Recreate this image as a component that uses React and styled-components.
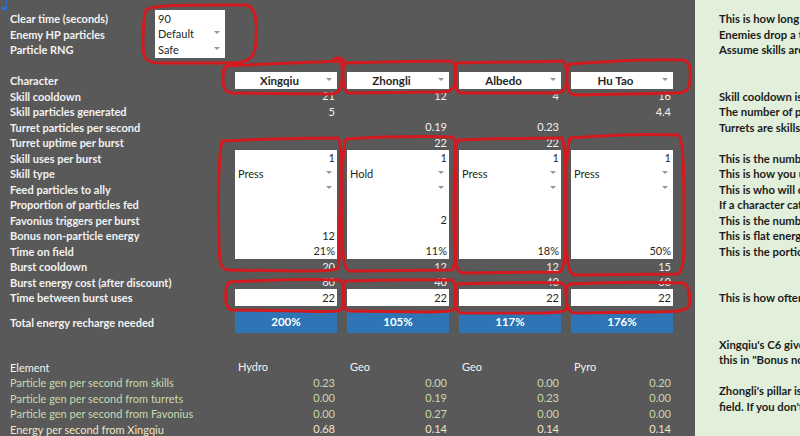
import React from 'react';
import styled, { createGlobalStyle } from 'styled-components';

const GlobalStyle = createGlobalStyle`
  html, body { margin: 0; padding: 0; background: #595959; }
  body { font-family: Lato, "Liberation Sans", Arial, sans-serif; }
`;

const ROW = 15.5;

const Page = styled.div`
  position: relative;
  display: flex;
  width: 800px;
  height: 436px;
  overflow: hidden;
  font-family: Lato, "Liberation Sans", Arial, sans-serif;
  font-size: 11px;
`;

const Sheet = styled.div`
  flex: none;
  width: 695px;
  box-sizing: border-box;
  padding-left: 10px;
  background: #595959;
  display: flex;
  flex-direction: column;
`;

const Corner = styled.div`
  height: 10px;
  margin-left: -10px;
  display: flex;
  flex-direction: column;
  align-items: flex-start;
`;

const CornerLine = styled.span`
  width: 1.5px;
  height: 7px;
  margin-left: 5.5px;
  background: #2f6fd0;
`;

const CornerBlock = styled.span`
  width: 6px;
  height: 3px;
  margin-left: 1px;
  background: #2f6fd0;
`;

const Row = styled.div`
  display: grid;
  grid-template-columns: ${(p) => (p.$top ? '145px 70px' : '215px repeat(4, 102px)')};
  column-gap: ${(p) => (p.$top ? '0px' : '10px')};
  height: ${(p) => p.$h || ROW}px;
  margin-top: ${(p) => p.$mt || 0}px;
`;

const labelColors = {
  white: '#f2f2f2',
  green: '#c9d9b0',
  cream: '#f4e5c4',
};

const Label = styled.div`
  color: ${(p) => labelColors[p.$tone || 'white']};
  font-weight: ${(p) => (p.$plain ? 400 : 700)};
  line-height: ${(p) => p.$lh || ROW}px;
  white-space: nowrap;
  padding-top: 1px;
`;

const Cell = styled.div`
  display: grid;
  grid-template-columns: 1fr ${(p) => (p.$caret ? '16px' : '0px')};
  align-items: center;
  box-sizing: border-box;
  padding: 0 ${(p) => (p.$caret ? 0 : 2)}px 0 3px;
  background: ${(p) => (p.$white ? '#ffffff' : 'transparent')};
  box-shadow: ${(p) => (p.$white && !p.$last ? 'inset 0 -1px 0 #d9d9d9' : 'none')};
  color: ${(p) => (p.$white ? '#262626' : labelColors[p.$tone || 'white'])};
  font-weight: ${(p) => (p.$bold ? 700 : 400)};
  font-size: ${(p) => (p.$bold ? 11.5 : 11)}px;
  text-align: ${(p) => p.$align || 'right'};
  line-height: ${ROW}px;
  white-space: nowrap;
  overflow: hidden;
`;

const Caret = styled.span`
  justify-self: center;
  width: 0;
  height: 0;
  border-left: 3px solid transparent;
  border-right: 3px solid transparent;
  border-top: 3.5px solid #969696;
  margin-top: -2px;
`;

const Total = styled.div`
  display: flex;
  align-items: center;
  justify-content: center;
  background: #2e75b6;
  color: #ffffff;
  font-weight: 700;
  font-size: 11.5px;
`;

const Notes = styled.div`
  flex: 1;
  background: #e2efda;
  padding: 10px 0 0 24px;
  overflow: hidden;
  font-size: 11.3px;
`;

const Note = styled.div`
  height: ${(p) => (p.$rows || 1) * ROW}px;
  line-height: ${ROW}px;
  white-space: nowrap;
  color: #1c1c1c;
  font-weight: 700;
  padding-top: 1px;
  box-sizing: border-box;
`;

const Ink = styled.svg`
  position: absolute;
  left: 0;
  top: 0;
  pointer-events: none;
`;

const chars = ['Xingqiu', 'Zhongli', 'Albedo', 'Hu Tao'];

const greyRows = [
  ['Skill cooldown', ['21', '12', '4', '16']],
  ['Skill particles generated', ['5', '', '', '4.4']],
  ['Turret particles per second', ['', '0.19', '0.23', '']],
  ['Turret uptime per burst', ['', '22', '22', '']],
];

const inputRows = [
  ['Skill uses per burst', ['1', '1', '1', '1']],
  ['Skill type', ['Press', 'Hold', 'Press', 'Press'], true],
  ['Feed particles to ally', ['', '', '', ''], true],
  ['Proportion of particles fed', ['', '', '', '']],
  ['Favonius triggers per burst', ['', '2', '', '']],
  ['Bonus non-particle energy', ['12', '', '', '']],
  ['Time on field', ['21%', '11%', '18%', '50%']],
];

const burstRows = [
  ['Burst cooldown', ['20', '12', '12', '15']],
  ['Burst energy cost (after discount)', ['80', '40', '40', '60']],
];

const totals = ['200%', '105%', '117%', '176%'];
const elements = ['Hydro', 'Geo', 'Geo', 'Pyro'];

const genRows = [
  ['Particle gen per second from skills', ['0.23', '0.00', '0.00', '0.20'], 'green'],
  ['Particle gen per second from turrets', ['0.00', '0.19', '0.23', '0.00'], 'green'],
  ['Particle gen per second from Favonius', ['0.00', '0.27', '0.00', '0.00'], 'green'],
  ['Energy per second from Xingqiu', ['0.68', '0.14', '0.14', '0.14'], 'cream'],
];

const notes = [
  ['This is how long the fight lasts'],
  ['Enemies drop a total of particles'],
  ['Assume skills are used on cooldown'],
  ['', 2],
  ['Skill cooldown is after reductions'],
  ['The number of particles generated'],
  ['Turrets are skills that keep generating'],
  ['', 1],
  ['This is the number of skill uses'],
  ['This is how you use the skill'],
  ['This is who will collect the particles'],
  ['If a character catches particles'],
  ['This is the number of Favonius procs'],
  ['This is flat energy from other sources'],
  ['This is the portion of time on field'],
  ['', 2],
  ['This is how often you burst'],
  ['', 2],
  ["Xingqiu's C6 gives energy, put"],
  ['this in "Bonus non-particle energy"'],
  ['', 1],
  ["Zhongli's pillar is a turret on"],
  ["field. If you don't use it"],
];

const inkPaths = [
  'M146 10 C152 4 200 5 246 5 C256 7 257 20 256 40 C256 57 250 63 230 63 L160 63 C146 63 143 58 143 45 C143 30 143 18 146 10',
  'M228 66 C260 64 300 63 338 61 C343 62 343 70 342 80 C341 90 338 94 330 94 L232 93 C224 92 223 86 223 78 C223 70 224 66 228 66',
  'M334 59 C338 57 344 58 345 64',
  'M346 63 C380 62 420 61 450 61 C456 62 456 72 455 82 C454 90 450 92 440 92 L350 93 C344 93 343 85 343 75 C343 68 343 64 346 63',
  'M457 63 C490 62 530 62 562 61 C567 62 567 75 566 85 C565 92 560 93 550 93 L462 93 C456 93 455 85 455 75 C455 68 455 64 457 63',
  'M570 64 C610 61 650 59 683 60 C690 61 691 70 690 80 C689 90 686 93 676 93 L575 95 C569 95 567 88 567 78 C567 70 567 65 570 64',
  'M222 141 C260 139 300 138 338 138 C342 140 341 170 340 210 C339 240 340 262 338 268 C336 271 320 271 300 271 L228 270 C220 270 219 260 219 240 C218 200 218 160 222 141',
  'M346 139 C380 137 420 136 453 137 C457 140 456 180 456 220 C456 250 456 265 452 270 L350 271 C343 270 342 250 342 220 C342 180 342 150 346 139',
  'M458 140 C490 139 530 138 562 138 C566 142 565 180 565 220 C565 250 566 266 560 272 L462 273 C455 272 454 255 454 220 C454 180 454 150 458 140',
  'M570 138 C610 135 650 134 678 135 C684 138 684 180 684 220 C684 250 685 268 678 274 L575 275 C567 274 566 255 566 220 C566 180 566 150 570 138',
  'M230 282 C270 280 310 279 340 280 C345 284 345 300 343 308 C341 312 330 312 300 311 L232 310 C226 309 225 300 226 292 C226 286 227 283 230 282',
  'M346 281 C380 280 420 279 452 280 C457 283 457 300 455 308 C453 312 440 312 420 312 L350 311 C344 311 343 300 343 292 C343 285 344 282 346 281',
  'M458 284 C490 283 530 282 562 283 C567 286 567 300 566 309 C564 313 550 313 530 313 L462 313 C456 313 455 302 455 294 C455 287 456 285 458 284',
  'M570 284 C610 282 650 282 683 283 C690 286 691 298 689 306 C686 312 670 312 650 312 L574 313 C567 312 566 302 566 294 C566 288 567 285 570 284',
];

function ValueRow({ label, values, white, last, caret, tone }) {
  return (
    <Row>
      <Label $tone={tone} $plain={tone && tone !== 'white'}>{label}</Label>
      {values.map((v, i) => (
        <Cell
          key={i}
          $white={white}
          $last={last}
          $caret={caret}
          $tone={tone}
          $align={caret ? 'left' : 'right'}
        >
          <span>{v}</span>
          {caret ? <Caret /> : <span />}
        </Cell>
      ))}
    </Row>
  );
}

export default function App() {
  return (
    <Page>
      <GlobalStyle />
      <Sheet>
        <Corner>
          <CornerLine />
          <CornerBlock />
        </Corner>

        <Row $top>
          <Label>Clear time (seconds)</Label>
          <Cell $white $align="left">
            <span>90</span>
            <span />
          </Cell>
        </Row>
        <Row $top>
          <Label>Enemy HP particles</Label>
          <Cell $white $caret $align="left">
            <span>Default</span>
            <Caret />
          </Cell>
        </Row>
        <Row $top>
          <Label>Particle RNG</Label>
          <Cell $white $caret $last $align="left">
            <span>Safe</span>
            <Caret />
          </Cell>
        </Row>
        <Row />

        <Row>
          <Label>Character</Label>
          {chars.map((c) => (
            <Cell key={c} $white $last $caret $bold $align="center">
              <span>{c}</span>
              <Caret />
            </Cell>
          ))}
        </Row>

        {greyRows.map(([l, v]) => (
          <ValueRow key={l} label={l} values={v} />
        ))}
        {inputRows.map(([l, v, caret], i) => (
          <ValueRow key={l} label={l} values={v} caret={caret} white last={i === inputRows.length - 1} />
        ))}
        {burstRows.map(([l, v]) => (
          <ValueRow key={l} label={l} values={v} />
        ))}
        <ValueRow label="Time between burst uses" values={['22', '22', '22', '22']} white last />

        <Row $h={21} $mt={6}>
          <Label $lh={21}>Total energy recharge needed</Label>
          {totals.map((t, i) => (
            <Total key={i}>{t}</Total>
          ))}
        </Row>

        <Row $mt={27}>
          <Label $plain>Element</Label>
          {elements.map((e, i) => (
            <Cell key={i} $align="left">
              <span>{e}</span>
              <span />
            </Cell>
          ))}
        </Row>
        {genRows.map(([l, v, tone]) => (
          <ValueRow key={l} label={l} values={v} tone={tone} />
        ))}
      </Sheet>

      <Notes>
        {notes.map(([t, rows], i) => (
          <Note key={i} $rows={rows}>{t}</Note>
        ))}
      </Notes>

      <Ink width="800" height="436" viewBox="0 0 800 436">
        {inkPaths.map((d, i) => (
          <path
            key={i}
            d={d}
            fill="none"
            stroke="#d21a1f"
            strokeWidth="3"
            strokeLinecap="round"
            strokeLinejoin="round"
          />
        ))}
      </Ink>
    </Page>
  );
}
